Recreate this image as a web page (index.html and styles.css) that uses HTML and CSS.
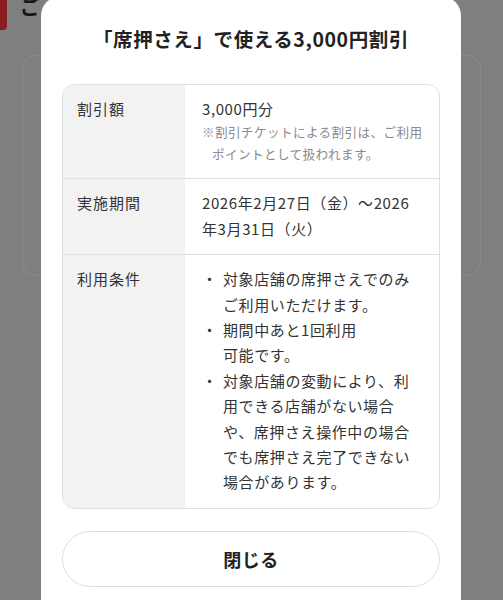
FILE: index.html
```html
<!DOCTYPE html>
<html lang="ja">
<head>
<meta charset="utf-8">
<link rel="stylesheet" href="styles.css">
</head>
<body>
<div class="page">
  <div class="bg-header"><span class="tab"></span><span class="bg-title">ご</span></div>
  <div class="bg-card"></div>
</div>
<div class="modal">
  <h1 class="title">「席押さえ」で使える3,000円割引</h1>
  <div class="table">
    <div class="row">
      <div class="label">割引額</div>
      <div class="value">
        <div>3,000円分</div>
        <p class="note">※割引チケットによる割引は、ご利用<br>ポイントとして扱われます。</p>
      </div>
    </div>
    <div class="row">
      <div class="label">実施期間</div>
      <div class="value">2026年2月27日（金）〜2026<br>年3月31日（火）</div>
    </div>
    <div class="row">
      <div class="label">利用条件</div>
      <div class="value">
        <ul class="list">
          <li><span class="dot">・</span><span>対象店舗の席押さえでのみ<br>ご利用いただけます。</span></li>
          <li><span class="dot">・</span><span>期間中あと1回利用<br>可能です。</span></li>
          <li><span class="dot">・</span><span>対象店舗の変動により、利<br>用できる店舗がない場合<br>や、席押さえ操作中の場合<br>でも席押さえ完了できない<br>場合があります。</span></li>
        </ul>
      </div>
    </div>
  </div>
  <button class="close">閉じる</button>
</div>
</body>
</html>
```
FILE: styles.css
```css
html, body {
  margin: 0;
  padding: 0;
}
body {
  width: 503px;
  height: 600px;
  overflow: hidden;
  background: #7f7f7f;
  position: relative;
  font-family: "Noto Sans CJK JP", "Noto Sans", sans-serif;
  color: #222;
}
.page {
  display: flex;
  flex-direction: column;
}
.bg-header {
  display: flex;
  gap: 13px;
  height: 30px;
}
.tab {
  width: 7px;
  height: 30px;
  background: #8b1c20;
  border-bottom-right-radius: 4px;
}
.bg-title {
  font-size: 20px;
  font-weight: bold;
  line-height: 20px;
  margin-top: -3px;
  color: #151515;
}
.bg-card {
  margin: 25px 22px 0 22px;
  height: 219px;
  border: 1px solid #8b8b8b;
  border-radius: 14px;
}
.modal {
  position: absolute;
  left: 41px;
  top: -4px;
  width: 420px;
  height: 640px;
  box-sizing: border-box;
  background: #fff;
  border-radius: 20px;
  padding: 30px 21px 0;
  display: flex;
  flex-direction: column;
}
.title {
  margin: 0;
  font-size: 19.5px;
  letter-spacing: 0.6px;
  line-height: 26px;
  font-weight: bold;
  text-align: center;
  color: #222;
}
.table {
  margin-top: 32px;
  border: 1px solid #e0e0e0;
  border-radius: 12px;
  overflow: hidden;
}
.row {
  display: grid;
  grid-template-columns: 122px 1fr;
  border-top: 1px solid #e0e0e0;
}
.row:first-child {
  border-top: none;
}
.label {
  background: #f2f2f2;
  padding: 11px 0 12px 14px;
  font-size: 15px;
  letter-spacing: 1px;
  line-height: 25px;
  color: #333;
}
.value {
  padding: 11px 0 13px 17px;
  font-size: 15px;
  letter-spacing: 0.6px;
  line-height: 25.4px;
  color: #333;
  white-space: nowrap;
}
.note {
  margin: 0;
  font-size: 12.6px;
  letter-spacing: 0.4px;
  line-height: 22px;
  color: #8a8a8a;
  padding-left: 10px;
  text-indent: -10px;
}
.list {
  list-style: none;
  margin: 0;
  padding: 0;
}
.list li {
  display: grid;
  grid-template-columns: 21px 1fr;
}
.dot {
  display: block;
}
.close {
  margin-top: 22px;
  height: 56px;
  border: 1px solid #dedede;
  border-radius: 28px;
  background: #fff;
  font-family: "Noto Sans CJK JP", "Noto Sans", sans-serif;
  font-size: 18px;
  letter-spacing: 0.5px;
  font-weight: bold;
  color: #222;
}
```
